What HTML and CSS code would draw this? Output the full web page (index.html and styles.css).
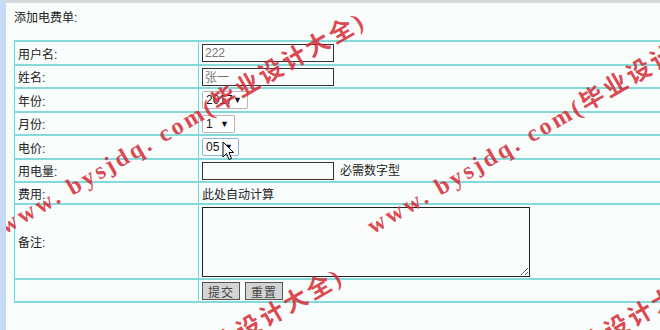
FILE: index.html
```html
<!DOCTYPE html>
<html lang="zh-CN">

<head>
    <meta charset="UTF-8" />
    <title>添加电费单</title>
    <link rel="stylesheet" href="styles.css">
</head>

<body>
    <div class="page">
        <p class="title">添加电费单:</p>
        <table class="form">
            <tr class="row-a">
                <td class="label">用户名:</td>
                <td><input class="text grey" type="text" value="222"></td>
            </tr>
            <tr class="row-b">
                <td class="label">姓名:</td>
                <td><input class="text grey" type="text" value="张一"></td>
            </tr>
            <tr class="row-c">
                <td class="label">年份:</td>
                <td><span class="pick w-year">2017</span></td>
            </tr>
            <tr class="row-b">
                <td class="label">月份:</td>
                <td><span class="pick w-month">1</span></td>
            </tr>
            <tr class="row-c">
                <td class="label">电价:</td>
                <td><span class="pick w-price hover">05</span></td>
            </tr>
            <tr class="row-b">
                <td class="label">用电量:</td>
                <td><input class="text" type="text"> <span class="hint">必需数字型</span></td>
            </tr>
            <tr class="row-d">
                <td class="label">费用:</td>
                <td>此处自动计算</td>
            </tr>
            <tr class="row-e">
                <td class="label">备注:</td>
                <td><textarea class="note"></textarea></td>
            </tr>
            <tr class="row-b">
                <td></td>
                <td class="actions"><button>提交</button><button>重置</button></td>
            </tr>
        </table>
    </div>

    <div class="side-tab">&lsaquo;</div>

    <div class="watermarks">
        <span class="mark m1">www. bysjdq. com(毕业设计大全)</span>
        <span class="mark m2">www. bysjdq. com(毕业设计大全)</span>
        <span class="mark m3">www. bysjdq. com(毕业设计大全)</span>
        <span class="mark m4">www. bysjdq. com(毕业设计大全)</span>
    </div>

    <svg class="cursor" width="13" height="20" viewBox="0 0 13 20">
        <path d="M1 1 L1 16 L4.5 12.5 L7 18.5 L9.5 17.5 L7 11.5 L11.5 11.5 Z" fill="#fff" stroke="#000" stroke-width="1" stroke-linejoin="round" />
    </svg>
</body>

</html>
```

FILE: styles.css
```css
* {
    margin: 0;
    padding: 0;
    box-sizing: border-box;
}

html,
body {
    height: 100%;
    overflow: hidden;
}

body {
    position: relative;
    background: #f8fcfa;
    border-top: 3px solid #d5d9dc;
    border-left: 6px solid #c6dbf3;
    font-family: "Liberation Sans", "Noto Sans CJK SC", sans-serif;
    font-size: 12px;
    color: #222;
}

.page {
    padding: 6px 0 0 8px;
}

.title {
    line-height: 18px;
    margin-bottom: 13px;
}

.form {
    width: 720px;
    border-collapse: collapse;
    border-left: 1px solid #5fe0e6;
}

.form td {
    border-top: 2px solid #84dada;
    border-bottom: 2px solid #84dada;
    border-right: 1px solid #5fe0e6;
    padding: 0 2px 0 3px;
    vertical-align: middle;
}

.form td.label {
    width: 184px;
}

.row-a td {
    height: 24px;
}

.row-b td {
    height: 23px;
}

.row-c td {
    height: 24px;
}

.row-d td {
    height: 22px;
}

.row-e td {
    height: 75px;
}

.text {
    display: block;
    float: left;
    width: 132px;
    height: 18px;
    border: 1px solid #333;
    background: #fbfdfc;
    font: inherit;
    color: #222;
    padding: 0 2px;
}

.text.grey {
    color: #777;
}

.hint {
    display: inline-block;
    margin-left: 6px;
    line-height: 18px;
}

.pick {
    position: relative;
    display: block;
    height: 18px;
    line-height: 16px;
    padding-left: 3px;
    border: 1px solid #b8b8b8;
    border-radius: 2px;
    background: #fff;
    color: #111;
}

.pick::after {
    content: "▼";
    position: absolute;
    right: 5px;
    top: 0;
    font-size: 9px;
    color: #111;
}

.pick.hover {
    border-color: #8fb6de;
}

.w-year {
    width: 46px;
}

.w-month {
    width: 33px;
}

.w-price {
    width: 37px;
}

.note {
    display: block;
    width: 328px;
    height: 70px;
    border: 1px solid #222;
    background: #fbfdfc;
    resize: both;
}

.actions {
    padding-left: 2px;
}

.actions button {
    height: 18px;
    padding: 0 5px;
    margin-right: 5px;
    border: 1px solid #555;
    background: #d4d4d4;
    color: #444;
    font: inherit;
    letter-spacing: 1px;
}

.side-tab {
    position: absolute;
    left: -6px;
    top: 244px;
    width: 6px;
    height: 12px;
    background: #f3f6f9;
    font-size: 10px;
    line-height: 12px;
    color: #444;
    overflow: hidden;
}

.watermarks {
    position: absolute;
    left: -6px;
    top: -3px;
    width: 660px;
    height: 330px;
    overflow: hidden;
    pointer-events: none;
}

.mark {
    position: absolute;
    white-space: nowrap;
    font-family: "Liberation Serif", "Noto Sans CJK SC", serif;
    font-weight: bold;
    font-size: 24px;
    line-height: 24px;
    letter-spacing: 3px;
    color: rgba(214, 40, 52, 0.85);
    transform-origin: 0 100%;
    transform: rotate(-30deg);
}

.m1 {
    left: 7px;
    top: 214px;
}

.m2 {
    left: 375px;
    top: 214px;
}

.m3 {
    left: -15px;
    top: 470px;
}

.m4 {
    left: 353px;
    top: 470px;
}

.cursor {
    position: absolute;
    left: 216px;
    top: 138px;
}
```
